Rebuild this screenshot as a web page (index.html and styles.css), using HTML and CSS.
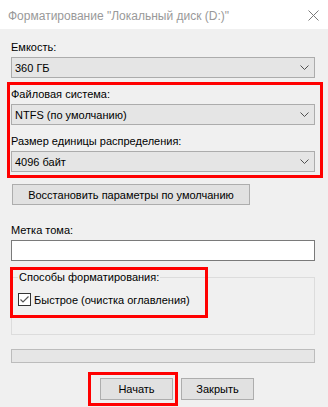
FILE: index.html
```html
<!DOCTYPE html>
<html lang="ru">
<head>
    <meta charset="UTF-8">
    <meta name="viewport" content="width=device-width, initial-scale=1.0">
    <title>Форматирование</title>
    <link rel="stylesheet" href="styles.css">
</head>
<body>
    <div class="dialog">
        <div class="titlebar">
            <span class="title">Форматирование "Локальный диск (D:)"</span>
            <svg class="close" width="11" height="11" viewBox="0 0 11 11">
                <path d="M0.5 0.5 L10.5 10.5 M10.5 0.5 L0.5 10.5" stroke="#7a7a7a" stroke-width="1" fill="none"/>
            </svg>
        </div>

        <div class="content">
            <div class="field">
                <div class="label">Емкость:</div>
                <div class="combo">
                    <span>360 ГБ</span>
                    <svg class="chev" width="9" height="5" viewBox="0 0 9 5"><path d="M0.5 0.5 L4.5 4.5 L8.5 0.5" stroke="#505050" fill="none"/></svg>
                </div>
            </div>

            <div class="marked">
                <div class="field gap">
                    <div class="label">Файловая система:</div>
                    <div class="combo">
                        <span>NTFS (по умолчанию)</span>
                        <svg class="chev" width="9" height="5" viewBox="0 0 9 5"><path d="M0.5 0.5 L4.5 4.5 L8.5 0.5" stroke="#505050" fill="none"/></svg>
                    </div>
                </div>
                <div class="field gap">
                    <div class="label">Размер единицы распределения:</div>
                    <div class="combo">
                        <span>4096 байт</span>
                        <svg class="chev" width="9" height="5" viewBox="0 0 9 5"><path d="M0.5 0.5 L4.5 4.5 L8.5 0.5" stroke="#505050" fill="none"/></svg>
                    </div>
                </div>
                <div class="mark mark-fs"></div>
            </div>

            <button class="btn btn-defaults">Восстановить параметры по умолчанию</button>

            <div class="field label-gap">
                <div class="label">Метка тома:</div>
                <input class="textbox" type="text" value="">
            </div>

            <div class="group-wrap">
                <fieldset class="group">
                    <legend>Способы форматирования:</legend>
                    <label class="check-row">
                        <svg class="check" width="13" height="13" viewBox="0 0 13 13">
                            <rect x="0.5" y="0.5" width="12" height="12" fill="#fff" stroke="#333"/>
                            <path d="M2.5 6.5 L5 9 L10.5 3.5" stroke="#555" stroke-width="1.2" fill="none"/>
                        </svg>
                        <span>Быстрое (очистка оглавления)</span>
                    </label>
                </fieldset>
                <div class="mark mark-opts"></div>
            </div>

            <div class="progress"></div>

            <div class="actions">
                <div class="start-wrap">
                    <button class="btn btn-action">Начать</button>
                    <div class="mark mark-start"></div>
                </div>
                <button class="btn btn-action">Закрыть</button>
            </div>
        </div>
    </div>
</body>
</html>
```

FILE: styles.css
```css
* {
    box-sizing: border-box;
}

body {
    margin: 0;
    background: #f0f0f0;
    font-family: 'Liberation Sans', Arial, sans-serif;
    font-size: 11px;
    color: #000;
}

.dialog {
    width: 328px;
    height: 407px;
    overflow: hidden;
}

.titlebar {
    height: 29px;
    background: #fff;
    display: flex;
    align-items: center;
    justify-content: space-between;
    padding: 2px 9px 0 8px;
}

.title {
    color: #999;
    font-size: 12px;
    white-space: nowrap;
}

.content {
    padding: 11px 13px 0 11px;
}

.label {
    line-height: 15px;
    height: 15px;
    margin-bottom: 2px;
    white-space: nowrap;
}

.gap {
    margin-top: 9px;
}

.label-gap {
    margin-top: 18px;
}

.combo {
    height: 21px;
    background: #e5e5e5;
    border: 1px solid #acacac;
    display: flex;
    align-items: center;
    justify-content: space-between;
    padding: 0 5px 0 3px;
}

.chev {
    display: block;
}

.marked,
.group-wrap,
.start-wrap {
    position: relative;
}

.mark {
    position: absolute;
    border: 3px solid #ff0000;
    pointer-events: none;
}

.mark-fs {
    top: -5px;
    left: -4px;
    right: -8px;
    bottom: -6px;
}

.mark-opts {
    top: -3px;
    left: -1px;
    width: 198px;
    height: 51px;
}

.mark-start {
    top: -6px;
    left: -12px;
    right: -5px;
    bottom: -6px;
}

.btn {
    font-family: inherit;
    font-size: 11px;
    color: #000;
    background: #e1e1e1;
    border: 1px solid #adadad;
    padding: 0;
    margin: 0;
    display: block;
    white-space: nowrap;
}

.btn-defaults {
    margin: 12px 0 0 1px;
    width: 238px;
    height: 21px;
}

.textbox {
    display: block;
    width: 100%;
    height: 21px;
    margin: 0;
    border: 1px solid #7a7a7a;
    background: #fff;
    outline: none;
}

.group-wrap {
    margin-top: 9px;
}

.group {
    margin: 0;
    border: 1px solid #dcdcdc;
    padding: 7px 0 27px 6px;
    height: 65px;
}

.group legend {
    padding: 0 1px;
    line-height: 15px;
}

.check-row {
    display: flex;
    align-items: center;
    gap: 3px;
    height: 15px;
    white-space: nowrap;
}

.check {
    display: block;
}

.progress {
    margin-top: 14px;
    height: 14px;
    background: #e6e6e6;
    border: 1px solid #bcbcbc;
}

.actions {
    margin-top: 15px;
    display: flex;
    gap: 8px;
    padding-left: 89px;
}

.btn-action {
    width: 73px;
    height: 22px;
}
```
